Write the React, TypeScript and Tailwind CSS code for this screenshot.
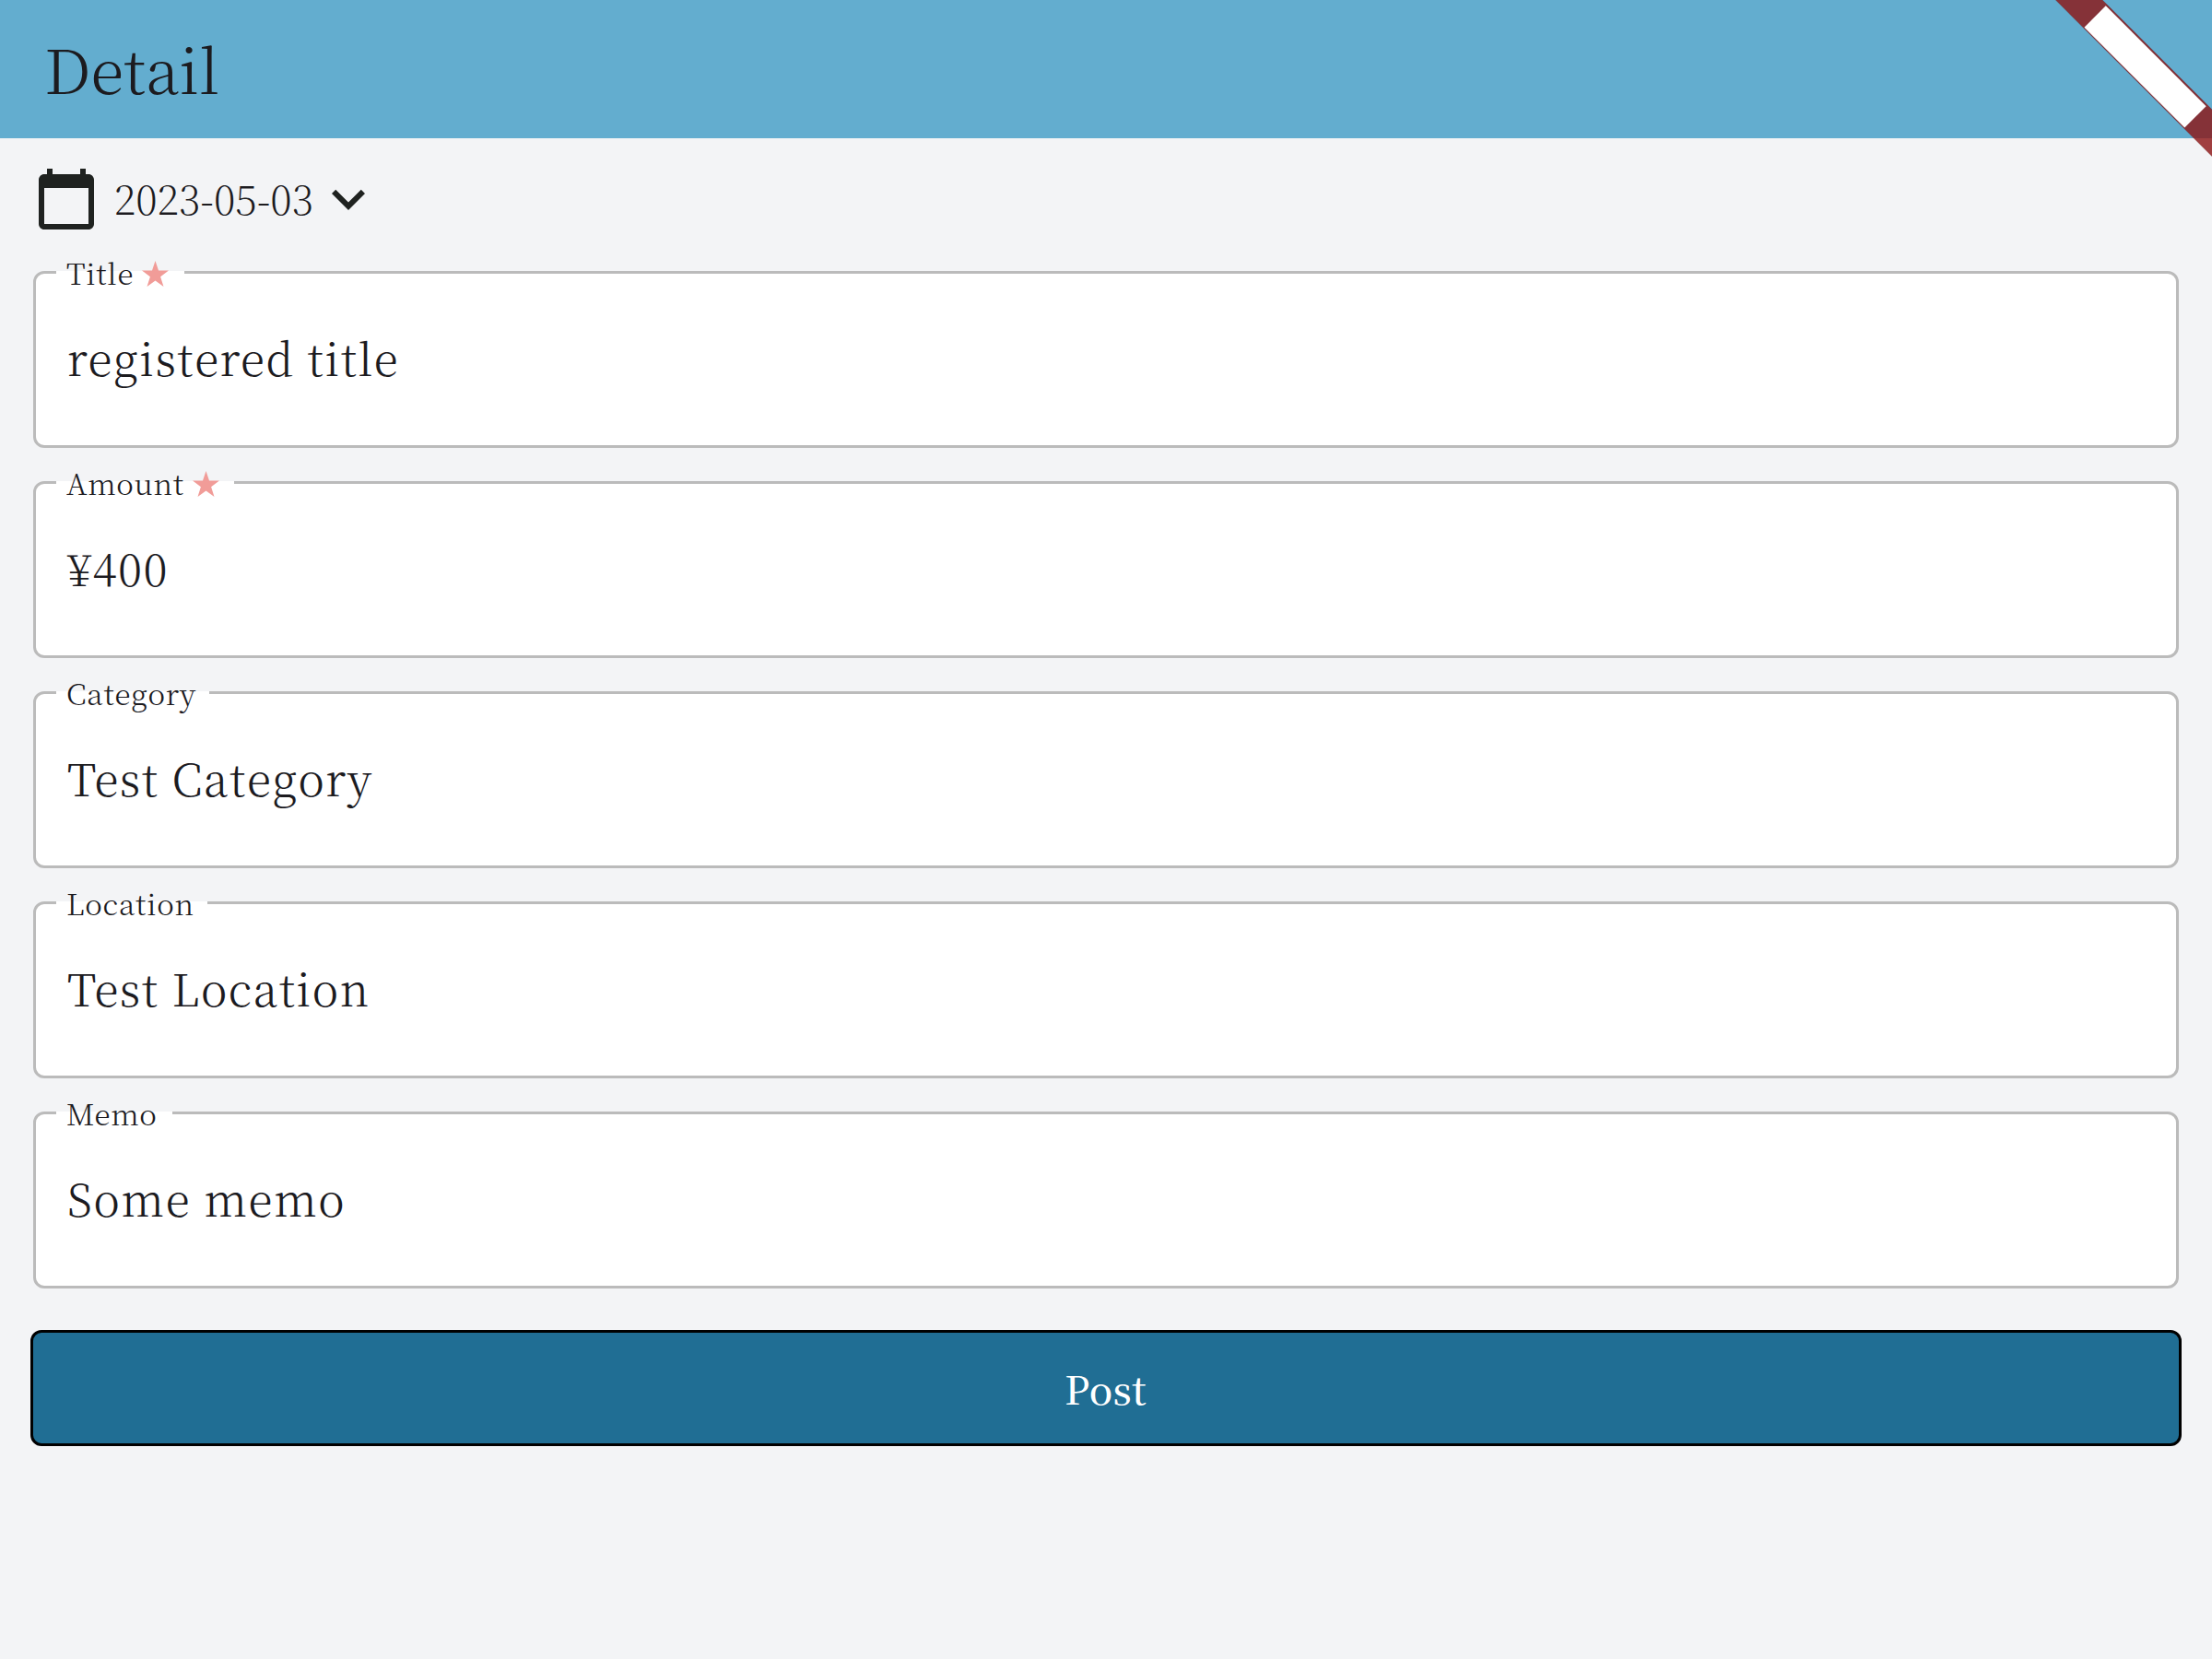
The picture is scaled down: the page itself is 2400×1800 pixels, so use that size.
import React from "react";

type Field = {
  label: string;
  value: string;
  required?: boolean;
  notch: string;
  tracking: string;
};

const fields: Field[] = [
  { label: "Title", value: "registered title", required: true, notch: "w-[139px]", tracking: "tracking-[1.45px]" },
  { label: "Amount", value: "¥400", required: true, notch: "w-[193px]", tracking: "tracking-[1.5px]" },
  { label: "Category", value: "Test Category", notch: "w-[166px]", tracking: "tracking-[1.5px]" },
  { label: "Location", value: "Test Location", notch: "w-[164px]", tracking: "tracking-[1.5px]" },
  { label: "Memo", value: "Some memo", notch: "w-[126px]", tracking: "tracking-[1.7px]" },
];

function Star() {
  return (
    <svg className="ml-[9px] h-[28px] w-[29px] shrink-0" viewBox="0 0 29 28" fill="#f19c98">
      <path d="M14.5 0 18 10.6H29L20.1 17.2 23.5 28 14.5 21.4 5.5 28 8.9 17.2 0 10.6H11z" />
    </svg>
  );
}

function FieldBox({ field }: { field: Field }) {
  return (
    <div className="relative flex h-48 items-center rounded-[12px] border-[3px] border-[#bbbbbb] bg-white pb-[5px] pl-[34px]">
      <div className={`absolute -top-[3px] left-[22px] flex h-[3px] items-center bg-white pl-[11px] ${field.notch}`}>
        <span className="text-[31.5px] leading-none tracking-[0.7px] whitespace-nowrap">{field.label}</span>
        {field.required && (
          <div className="pt-[3px]">
            <Star />
          </div>
        )}
      </div>
      <span className={`text-[48px] leading-none whitespace-nowrap ${field.tracking}`}>{field.value}</span>
    </div>
  );
}

function DebugBanner() {
  return (
    <div className="absolute top-0 right-0 h-[180px] w-[180px] overflow-hidden">
      <div className="absolute top-0 left-full h-0 w-0 origin-top-left rotate-45">
        <div className="absolute top-[84px] -left-[120px] h-[36px] w-[240px] bg-black/50">
          <div className="h-full bg-[#b71c1ca0] pt-[2.2px]">
            <div className="mx-auto h-[32.8px] w-[154px] bg-white" />
          </div>
        </div>
      </div>
    </div>
  );
}

export default function App() {
  return (
    <div className="relative h-[1800px] w-[2400px] overflow-hidden bg-[#f3f4f6] font-['Noto_Serif_CJK_JP','Liberation_Serif',serif] font-light text-[#1c1b1f]">
      <header className="flex h-[150px] items-center bg-[#63adcf] pb-[3px] pl-12">
        <h1 className="text-[66px] leading-none">Detail</h1>
      </header>

      <main className="px-9 pt-[30px]">
        <div className="flex h-[72px] items-center">
          <svg className="h-[72px] w-[72px]" viewBox="0 0 24 24" fill="#1f2220">
            <path d="M20 3h-1V1h-2v2H7V1H5v2H4c-1.1 0-2 .9-2 2v16c0 1.1.9 2 2 2h16c1.1 0 2-.9 2-2V5c0-1.1-.9-2-2-2zm0 18H4V8h16v13z" />
          </svg>
          <span className="ml-[16px] w-[218px] pb-[2px] text-[43.7px] leading-none font-extralight whitespace-nowrap">2023-05-03</span>
          <svg className="h-[72px] w-[72px]" viewBox="0 0 24 24" fill="#1f2220">
            <path d="M16.59 8.59L12 13.17 7.41 8.59 6 10l6 6 6-6z" />
          </svg>
        </div>

        <div className="mt-[42px] flex flex-col gap-9">
          {fields.map((field) => (
            <FieldBox key={field.label} field={field} />
          ))}
        </div>

        <button className="-mx-[3px] mt-[45px] flex h-[126px] w-[2334px] items-center justify-center rounded-[12px] border-[3px] border-black bg-[#206e94] pr-px text-[42px] leading-none font-medium tracking-[0.3px] text-white">
          Post
        </button>
      </main>

      <DebugBanner />
    </div>
  );
}
